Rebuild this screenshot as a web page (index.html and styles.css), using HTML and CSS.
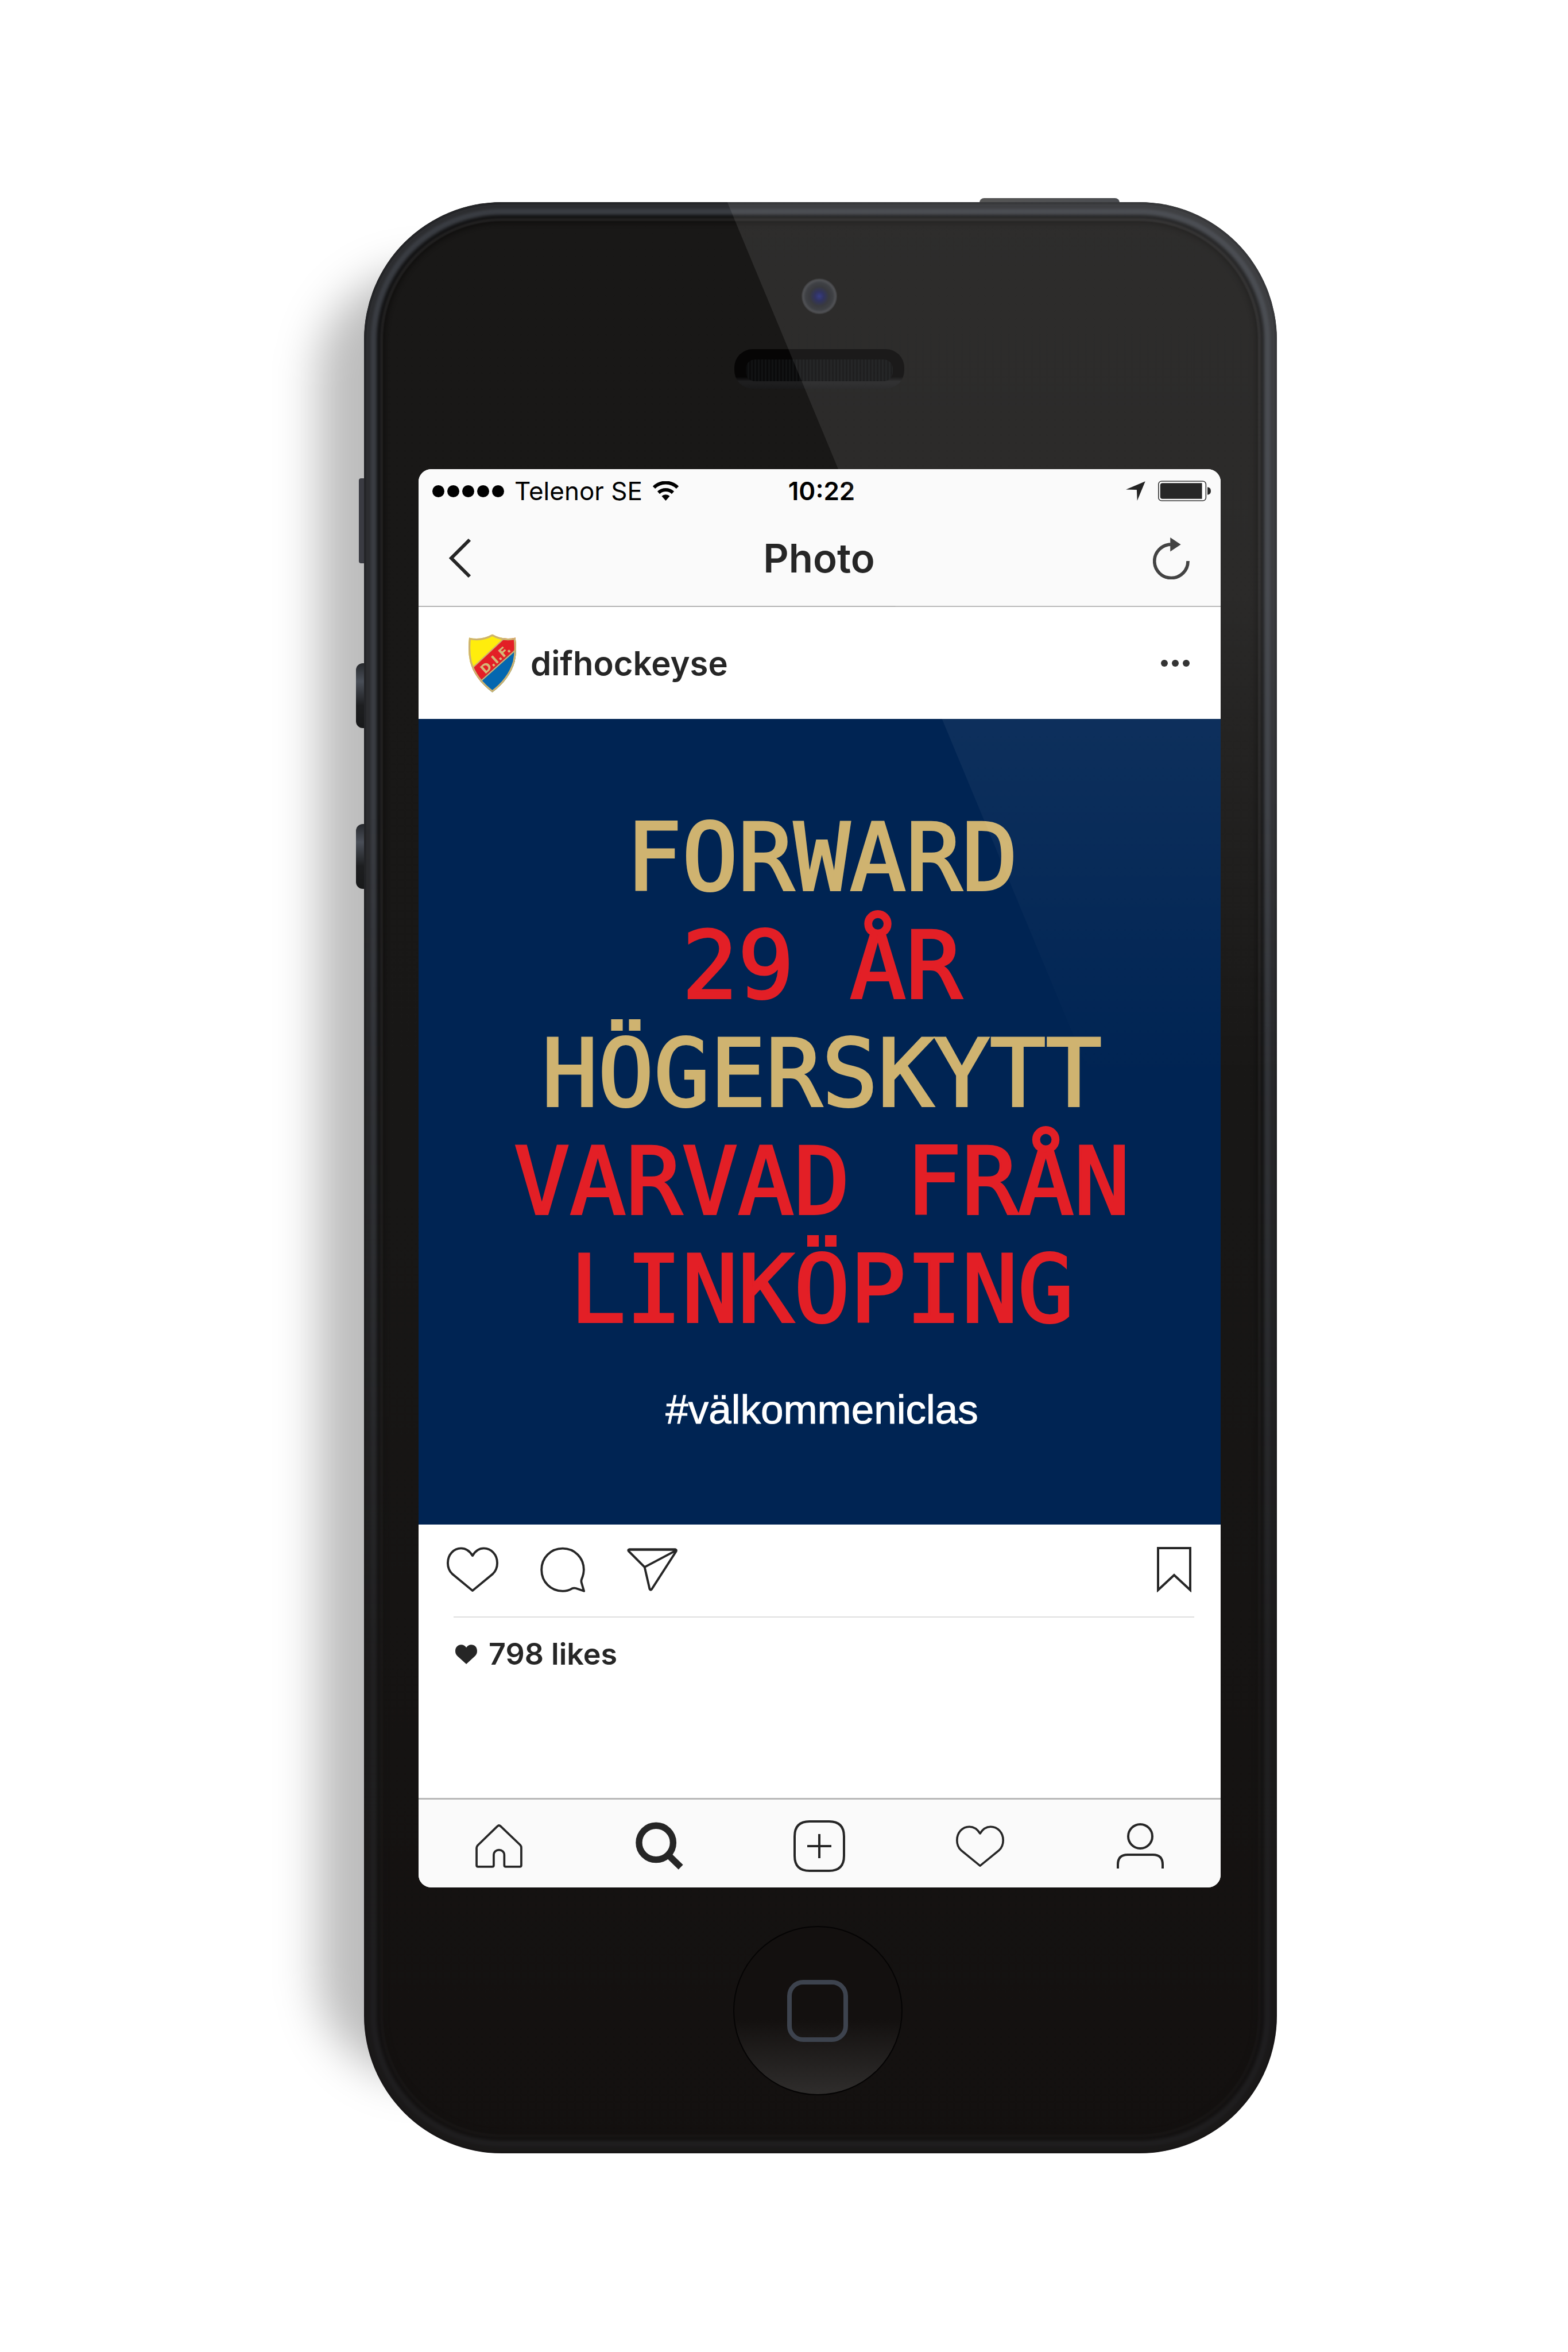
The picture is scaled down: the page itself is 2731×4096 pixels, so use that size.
FILE: index.html
```html
<!DOCTYPE html>
<html lang="sv">
<head>
<meta charset="utf-8">
<meta name="viewport" content="width=device-width, initial-scale=1">
<title>Photo – difhockeyse</title>
<link rel="stylesheet" href="styles.css">
</head>
<body>
<main class="stage">
  <div class="device">
    <div class="device-shadow"></div>
    <div class="key key-power"></div>
    <div class="key key-mute"></div>
    <div class="key key-volume key-up"></div>
    <div class="key key-volume key-down"></div>

    <div class="phone">
      <div class="forehead">
        <div class="camera"></div>
        <div class="speaker"></div>
      </div>

      <div class="screen">
        <div class="status">
          <div class="status-left">
            <div class="signal"><i></i><i></i><i></i><i></i><i></i></div>
            <span>Telenor SE</span>
            <svg class="wifi" viewBox="0 0 45 34" aria-hidden="true">
              <path d="M2 11 A29 29 0 0 1 43 11" fill="none" stroke="#000" stroke-width="6"/>
              <path d="M10 20 A18 18 0 0 1 35 20" fill="none" stroke="#000" stroke-width="6"/>
              <path d="M22.500 34 L15.500 26 A10 10 0 0 1 29.500 26 Z"/>
            </svg>
          </div>
          <time class="clock">10:22</time>
          <div class="status-right">
            <svg class="location" viewBox="92 76 126 126" aria-hidden="true"><path d="M217 77 L165 202 L162 132 L92 130 Z" fill="#111"/></svg>
            <svg class="battery" viewBox="300 70 340 132" aria-hidden="true">
              <rect x="303" y="73" width="305" height="126" rx="20" fill="#fff" stroke="#222" stroke-width="6"/>
              <path d="M328 85 H583 V187 H328 Q314 187 314 173 V99 Q314 85 328 85 Z" fill="#141414"/>
              <path d="M618 111 Q640 114 640 136 Q640 158 618 161 Z" fill="#141414"/>
            </svg>
          </div>
        </div>

        <header class="navbar">
          <button class="icon-button" type="button" aria-label="Back">
            <svg class="chevron" viewBox="0 0 40 70"><path d="M37 3 L5 35 L37 67" fill="none" stroke="#262626" stroke-width="6"/></svg>
          </button>
          <h1>Photo</h1>
          <button class="icon-button end" type="button" aria-label="Refresh">
            <svg class="refresh" viewBox="264 428 237 270">
              <path d="M378 473 A108 108 0 1 0 490 580" fill="none" stroke="#333" stroke-width="21"/>
              <path d="M376 428 L444 473 L376 519 Z" fill="#333"/>
            </svg>
          </button>
        </header>

        <article class="post">
          <div class="author">
            <svg class="crest" viewBox="80 82 314 378" role="img" aria-label="Djurgården crest">
              <defs><clipPath id="shield"><path d="M87 106 Q165 125 237 84 Q310 125 386 106 Q397 190 382 260 Q350 375 237 459 Q124 375 92 260 Q77 190 87 106 Z"/></clipPath></defs>
              <g clip-path="url(#shield)">
                <rect x="70" y="70" width="340" height="400" fill="#ffed0c"/>
                <path d="M60 350 L330 95 L460 95 L460 130 L100 445 Z" fill="#e31f26"/>
                <path d="M60 472 L460 115 V480 H60 Z" fill="#0467b0"/>
                <path d="M60 347 L330 95 M60 478 L460 120" stroke="#cdb272" stroke-width="8"/>
                <path d="M87 106 Q165 125 237 84 Q310 125 386 106 Q397 190 382 260 Q350 375 237 459 Q124 375 92 260 Q77 190 87 106 Z" fill="none" stroke="#cdb272" stroke-width="24"/>
                <text class="crest-text" x="258" y="273" text-anchor="middle" transform="rotate(-42 258 246)">D.I.F.</text>
              </g>
            </svg>
            <a class="name" href="#difhockeyse">difhockeyse</a>
            <button class="icon-button more" type="button" aria-label="More">
              <svg class="dots" viewBox="0 0 50 12"><circle cx="6" cy="6" r="6"/><circle cx="25" cy="6" r="6"/><circle cx="44" cy="6" r="6"/></svg>
            </button>
          </div>

          <div class="photo">
            <p class="headline">
              <span class="gold">FORWARD</span>
              <span>29 ÅR</span>
              <span class="gold">HÖGERSKYTT</span>
              <span>VARVAD FRÅN</span>
              <span>LINKÖPING</span>
            </p>
            <p class="hashtag">#välkommeniclas</p>
          </div>

          <div class="actions">
            <button class="icon-button" type="button" aria-label="Like">
              <svg class="line heart" viewBox="61 70 324 292" preserveAspectRatio="none"><path d="M223 355 L350 246 Q378 218 378 175 C378 120 340 79 294 79 Q250 79 223 127 Q195 79 151 79 C105 79 68 120 68 175 Q68 218 96 246 Z"/></svg>
            </button>
            <button class="icon-button" type="button" aria-label="Comment">
              <svg class="line comment" viewBox="636 70 284 294" preserveAspectRatio="none"><path d="M913 356 L862 338 Q850 334 838 339 Q810 356 778 356 C702 356 644 296 644 218 C644 140 702 80 778 80 C854 80 912 140 912 218 Q912 246 898 280 Q895 288 897 300 Z"/></svg>
            </button>
            <button class="icon-button" type="button" aria-label="Share">
              <svg class="line send" viewBox="1191 85 318 279" preserveAspectRatio="none"><path d="M1302 208 L1201 104 Q1196 95 1206 94 H1494 Q1505 95 1500 106 L1347 351 Q1339 361 1334 351 Z M1302 208 L1498 101"/><path d="M1204 95 H1498" class="thick"/></svg>
            </button>
            <button class="icon-button more" type="button" aria-label="Save">
              <svg class="line bookmark" viewBox="0 0 60 79"><path class="fine" d="M2 2 H58 V75 L30 49 L2 75 Z"/></svg>
            </button>
          </div>

          <div class="likes">
            <svg class="small-heart" viewBox="115 706 135 126" preserveAspectRatio="none" aria-hidden="true"><path d="M183 832 L237 780 Q250 768 250 748 C250 720 233 707 214 707 Q195 707 183 725 Q171 707 151 707 C132 707 115 722 115 748 Q115 768 128 780 Z"/></svg>
            <strong>798 likes</strong>
          </div>
        </article>

        <nav class="tabs">
          <a href="#home" aria-label="Home">
            <svg class="line home" viewBox="65 129 306 285"><path d="M209 141 Q218 132 228 141 L357 264 Q364 272 364 282 V396 Q364 406 354 406 H263 Q253 406 253 396 V330 C253 285 184 285 184 330 V396 Q184 406 174 406 H82 Q72 406 72 396 V284 Q72 275 80 266 Z"/></svg>
          </a>
          <a href="#search" aria-label="Search">
            <svg class="search" viewBox="1102 107 307 307"><circle cx="1234" cy="240" r="110" fill="none" stroke="#262626" stroke-width="42"/><path d="M1316 323 L1393 398" stroke="#262626" stroke-width="42"/></svg>
          </a>
          <a href="#new" aria-label="New post">
            <svg class="line plus" viewBox="0 0 90 90"><path class="fine" d="M28 2 H62 Q88 2 88 28 V62 Q88 88 62 88 H28 Q2 88 2 62 V28 Q2 2 28 2 Z M45 24 V66 M24 45 H66"/></svg>
          </a>
          <a href="#activity" aria-label="Activity">
            <svg class="line tab-heart" viewBox="61 70 324 292" preserveAspectRatio="none"><path d="M223 355 L350 246 Q378 218 378 175 C378 120 340 79 294 79 Q250 79 223 127 Q195 79 151 79 C105 79 68 120 68 175 Q68 218 96 246 Z"/></svg>
          </a>
          <a href="#profile" aria-label="Profile">
            <svg class="line person" viewBox="0 0 82 80"><circle class="fine" cx="41" cy="23" r="21"/><path class="fine" d="M2 79 V72 Q2 55 19 55 H63 Q80 55 80 72 V79"/></svg>
          </a>
        </nav>
      </div>

      <div class="chin">
        <button class="home-button" type="button" aria-label="Home button"><span></span></button>
      </div>
      <div class="glare"></div>
    </div>
  </div>
</main>
</body>
</html>
```

FILE: styles.css
```css
* { box-sizing: border-box; }

body {
  margin: 0;
  background: #fff;
  font-family: Inter, "Liberation Sans", sans-serif;
  color: #262626;
}

h1, p { margin: 0; }
svg { display: block; }
a { color: inherit; text-decoration: none; }

/* The device sits slightly right of the middle, leaving room for its shadow */
.stage {
  display: grid;
  grid-template-columns: 634fr minmax(0, 1590fr) 507fr;
  padding: 352px 0 346px;
  overflow: hidden;
}

.device {
  grid-column: 2;
  position: relative;
}

.device-shadow {
  position: absolute;
  top: 120px;
  bottom: 130px;
  left: -80px;
  width: 500px;
  border-radius: 180px;
  background: rgba(0, 0, 0, 0.26);
  filter: blur(38px);
}

.key { position: absolute; background: #3a3b42; }

.key-power {
  top: -7px;
  right: 274px;
  width: 244px;
  height: 20px;
  border-radius: 8px 8px 0 0;
  background: linear-gradient(90deg, #555, #4a4c50);
}

.key-mute {
  top: 481px;
  left: -9px;
  width: 20px;
  height: 148px;
  border-radius: 4px 0 0 4px;
}

.key-volume {
  left: -14px;
  width: 28px;
  height: 113px;
  border-radius: 12px 0 0 12px;
  background: linear-gradient(#26282c, #4a4f58 28%, #1d1e20 65%, #18191a);
}

.key-up { top: 803px; }
.key-down { top: 1083px; }

.phone {
  position: relative;
  border-radius: 240px;
  overflow: hidden;
  background: linear-gradient(#191817, #181716 50%, #13100f);
}

/* Metal rim, darker towards the bottom */
.phone::before {
  content: "";
  position: absolute;
  inset: 0;
  border-radius: inherit;
  box-shadow:
    inset 0 0 0 4px #242528,
    inset 0 0 4px 12px #2c2d30,
    inset 0 0 5px 22px #3b3e44,
    inset 0 0 3px 28px #131314,
    inset 0 0 2px 33px #222121,
    inset 0 0 6px 38px #121110;
  mask-image: linear-gradient(#000 30%, rgba(0, 0, 0, 0.3) 75%);
}

.forehead {
  position: relative;
  display: flex;
  flex-direction: column;
  align-items: center;
  gap: 61px;
  min-height: 465px;
  padding: 133px 4px 0 0;
}

.camera {
  width: 62px;
  height: 62px;
  border-radius: 50%;
  background: radial-gradient(circle, #252a78 0, #1d2050 18%, #26272c 38%, #2d2f33 54%, #404145 64%, #2b2b2c 70%);
}

.speaker {
  width: 296px;
  height: 69px;
  padding: 18px 20px 13px;
  border-radius: 32px;
  background: linear-gradient(#060505 70%, #1f1f20 82%, #19191a);
}

.speaker::before {
  content: "";
  display: block;
  height: 38px;
  border-radius: 16px;
  background: repeating-linear-gradient(90deg, #0a0a0b 0 3px, #111213 3px 6px);
}

.screen {
  position: relative;
  margin: 0 98px 0 95px;
  border-radius: 22px;
  overflow: hidden;
  background: #fff;
}

.icon-button {
  display: flex;
  padding: 0;
  border: 0;
  background: none;
}

.status {
  display: grid;
  grid-template-columns: 1fr auto 1fr;
  align-items: center;
  height: 76px;
  padding: 0 17px 0 24px;
  background: #fafafa;
  color: #000;
  font-size: 44px;
}

.status-left, .status-right { display: flex; align-items: center; }
.status-left { gap: 18px; }
.status-right { justify-content: flex-end; gap: 22px; }
.clock { font-weight: 600; }

.signal { display: flex; gap: 5px; }
.signal i { width: 21px; height: 21px; border-radius: 50%; background: #000; }

.wifi { width: 45px; height: 34px; }
.location { width: 34px; height: 34px; }
.battery { width: 92px; height: 36px; }

.navbar {
  display: grid;
  grid-template-columns: 1fr auto 1fr;
  align-items: center;
  height: 164px;
  padding: 0 54px 4px 52px;
  border-bottom: 2px solid #b4b4b4;
  background: #fafafa;
}

.navbar h1 { font-size: 69px; font-weight: 600; line-height: 80px; }
.end { justify-self: end; }
.chevron { width: 40px; height: 70px; }
.refresh { width: 64px; height: 73px; }

.author {
  display: flex;
  align-items: center;
  gap: 24px;
  height: 195px;
  padding: 0 54px 0 86px;
}

.crest { width: 85px; height: 102px; }
.crest-text { fill: #d6b878; font: bold 80px "DejaVu Sans", sans-serif; }
.name { font-size: 58px; font-weight: 600; line-height: 68px; }
.more { margin-left: auto; }
.dots { width: 50px; height: 12px; fill: #262626; }

.photo {
  padding: 148px 0 156px 8px;
  background: #002453;
  color: #e31f26;
  text-align: center;
}

.headline {
  font-family: "DejaVu Sans Mono", monospace;
  font-size: 162px;
  line-height: 188px;
  -webkit-text-stroke: 4px currentColor;
}

.headline span { display: block; white-space: nowrap; }
.headline .gold { color: #cfb370; }

.hashtag {
  margin-top: 71px;
  color: #fff;
  font-family: "Liberation Sans", Arial, sans-serif;
  font-size: 71px;
  line-height: 88px;
  -webkit-text-stroke: 1px currentColor;
}

.actions {
  display: flex;
  align-items: center;
  gap: 73px;
  height: 160px;
  padding: 0 51px 4px 49px;
}

.line { fill: none; stroke: #262626; stroke-width: 14; stroke-linejoin: round; }
.fine { stroke-width: 4; }
.thick { stroke-width: 16; }
.heart { width: 90px; height: 78px; }
.comment { width: 78px; height: 79px; }
.send { width: 88px; height: 75px; }
.bookmark { width: 60px; height: 79px; }
.bookmark path { stroke-linejoin: miter; }

.likes {
  display: flex;
  align-items: center;
  gap: 20px;
  height: 316px;
  margin: 0 46px 0 61px;
  padding: 0 0 186px 3px;
  border-top: 2px solid #dedede;
  font-size: 52px;
  line-height: 64px;
}

.likes strong { font-weight: 600; }
.small-heart { width: 38px; height: 34px; fill: #262626; }

.tabs {
  display: grid;
  grid-template-columns: repeat(5, 1fr);
  height: 156px;
  padding-top: 8px;
  border-top: 3px solid #b8b8b8;
  background: #fafafa;
}

.tabs a { display: flex; align-items: center; justify-content: center; }
.home { width: 82px; height: 76px; }
.search { width: 83px; height: 83px; }
.plus { width: 90px; height: 90px; }
.tab-heart { width: 84px; height: 72px; }
.person { width: 82px; height: 80px; }

.chin {
  position: relative;
  display: flex;
  justify-content: center;
  min-height: 463px;
  padding: 67px 10px 101px 0;
}

.home-button {
  display: flex;
  align-items: center;
  justify-content: center;
  width: 295px;
  height: 295px;
  padding: 0;
  border: 2px solid #050404;
  border-radius: 50%;
  background:
    radial-gradient(circle 240px at 50% -26%, #13100f 97%, transparent 100%),
    linear-gradient(#13100f 55%, #2f2d2c);
}

.home-button span {
  width: 106px;
  height: 108px;
  border: 8px solid #3d434e;
  border-radius: 28px;
}

/* Diagonal reflection across glass and photo */
.glare {
  position: absolute;
  inset: 0;
  clip-path: polygon(39.8% 0, 100% 0, 100% 67.8%);
  background: linear-gradient(rgba(255, 255, 255, 0.09), rgba(255, 255, 255, 0.08) 20%, rgba(255, 255, 255, 0.05) 27%, rgba(255, 255, 255, 0) 45%);
  pointer-events: none;
}
```
